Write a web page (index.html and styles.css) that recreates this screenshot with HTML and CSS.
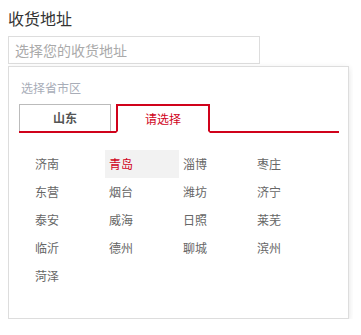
FILE: index.html
```html
<!DOCTYPE html>
<html lang="zh-CN">
<head>
    <meta charset="UTF-8">
    <meta name="viewport" content="width=device-width, initial-scale=1.0">
    <title>收货地址</title>
    <link rel="stylesheet" href="styles.css">
</head>
<body>

<div class="address">
    <div class="address-title">收货地址</div>
    <input type="text" class="address-input" placeholder="选择您的收货地址" />

    <div class="picker">
        <div class="picker-label">选择省市区</div>
        <div class="picker-tabs">
            <div class="picker-tab">山东</div>
            <div class="picker-tab active">请选择</div>
        </div>
        <ul class="picker-list">
            <li>济南</li>
            <li class="active">青岛</li>
            <li>淄博</li>
            <li>枣庄</li>
            <li>东营</li>
            <li>烟台</li>
            <li>潍坊</li>
            <li>济宁</li>
            <li>泰安</li>
            <li>威海</li>
            <li>日照</li>
            <li>莱芜</li>
            <li>临沂</li>
            <li>德州</li>
            <li>聊城</li>
            <li>滨州</li>
            <li>菏泽</li>
        </ul>
    </div>
</div>

</body>
</html>
```

FILE: styles.css
```css
body {
    margin: 8px;
    font-family: "Noto Sans CJK SC", "Noto Sans", sans-serif;
    color: #333;
    background: #fff;
}
.address-title {
    font-size: 16px;
    line-height: 20px;
    margin-bottom: 8px;
}
.address-input {
    display: block;
    box-sizing: border-box;
    width: 252px;
    height: 28px;
    margin: 0;
    padding: 0 6px;
    border: 1px solid #ddd;
    font-family: inherit;
    font-size: 14px;
    color: #333;
    outline: none;
}
.address-input::placeholder {
    color: #aaa;
}
.picker {
    box-sizing: border-box;
    width: 341px;
    margin-top: 2px;
    padding: 12px 9px 28px 10px;
    border: 1px solid #ddd;
    background: #fff;
    box-shadow: 0 2px 6px rgba(0, 0, 0, 0.12);
}
.picker-label {
    font-size: 12px;
    line-height: 18px;
    color: #a8adb8;
    padding-left: 2px;
    margin-bottom: 7px;
}
.picker-tabs {
    display: flex;
    gap: 5px;
    border-bottom: 2px solid #d0021b;
}
.picker-tab {
    width: 90px;
    height: 26px;
    line-height: 26px;
    text-align: center;
    font-size: 12px;
    font-weight: bold;
    color: #555;
    border: 1px solid #bbb;
    border-bottom: none;
}
.picker-tab.active {
    font-weight: normal;
    color: #d0021b;
    border: 2px solid #d0021b;
    border-bottom: 2px solid #fff;
    height: 25px;
    line-height: 25px;
    margin-bottom: -2px;
}
.picker-list {
    display: grid;
    grid-template-columns: repeat(4, 74px);
    list-style: none;
    margin: 17px 0 0;
    padding: 0 0 0 12px;
}
.picker-list li {
    height: 28px;
    line-height: 28px;
    padding-left: 4px;
    font-size: 12px;
    color: #666;
}
.picker-list li.active {
    color: #d0021b;
    background: #f2f2f2;
}
```
